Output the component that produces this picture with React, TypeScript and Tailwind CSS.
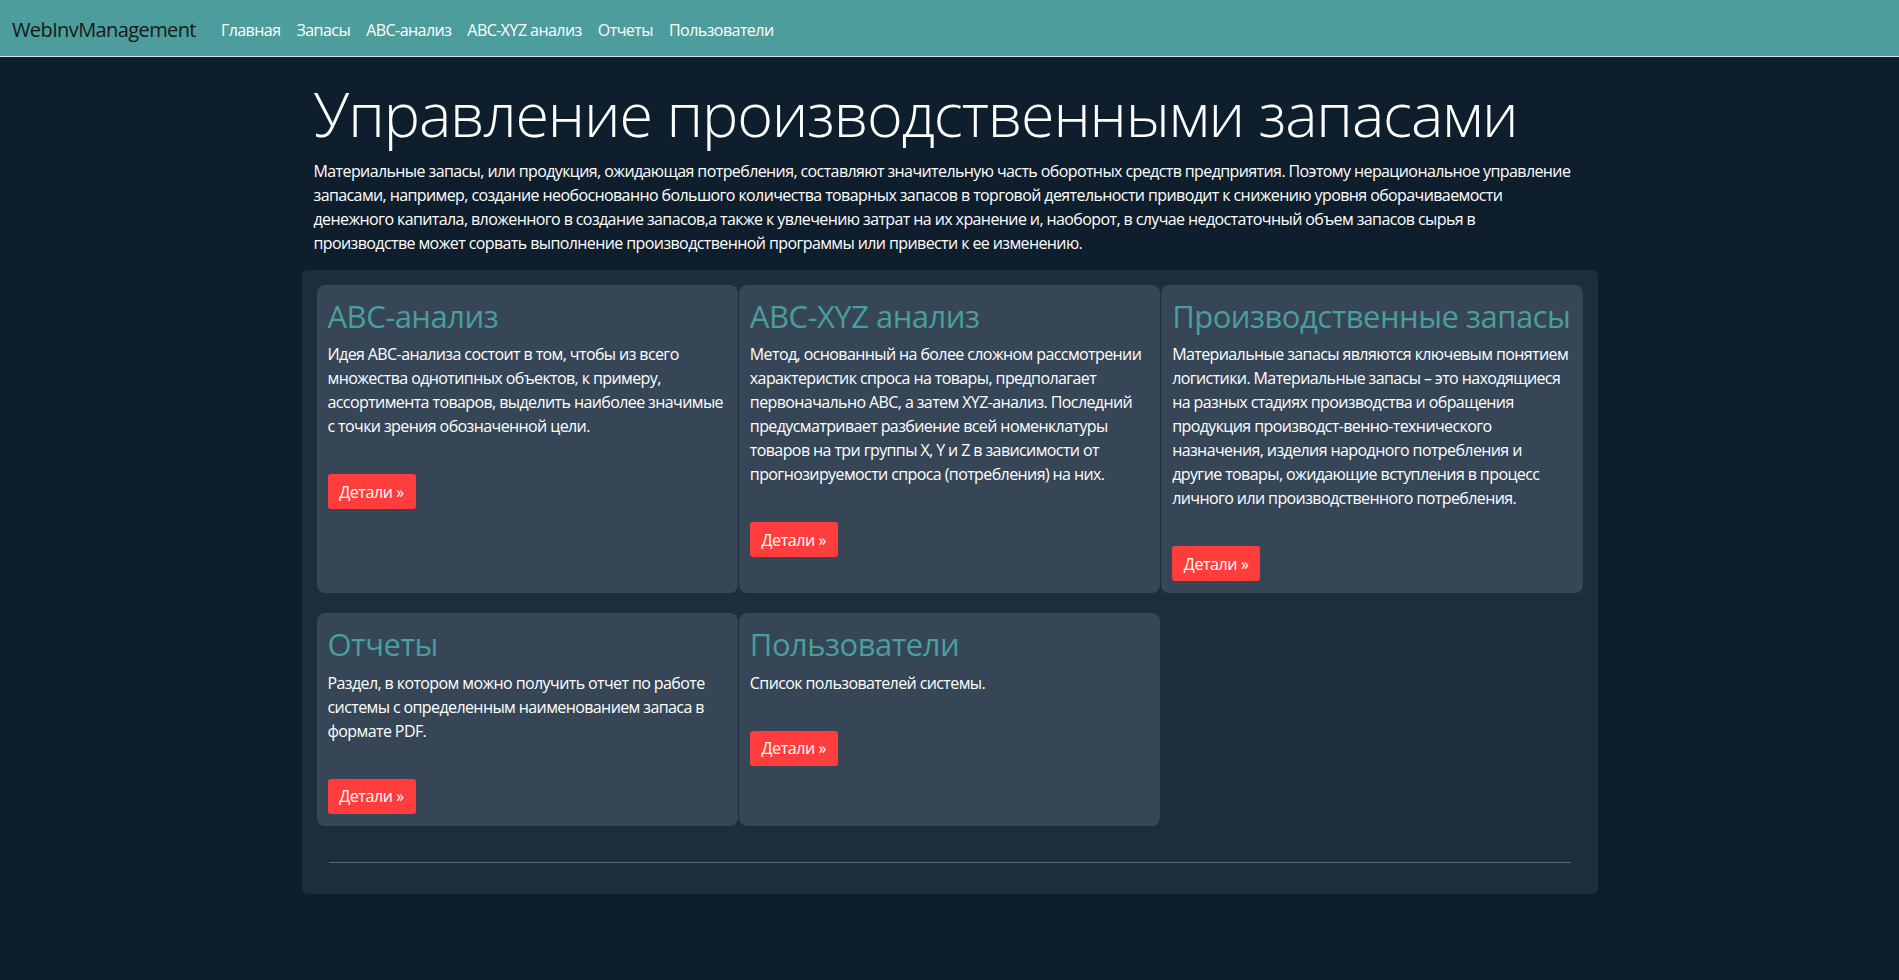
import React from "react";

const navLinks = ["Главная", "Запасы", "ABC-анализ", "ABC-XYZ анализ", "Отчеты", "Пользователи"];

const intro = [
  "Материальные запасы, или продукция, ожидающая потребления, составляют значительную часть оборотных средств предприятия. Поэтому нерациональное управление",
  "запасами, например, создание необоснованно большого количества товарных запасов в торговой деятельности приводит к снижению уровня оборачиваемости",
  "денежного капитала, вложенного в создание запасов,а также к увлечению затрат на их хранение и, наоборот, в случае недостаточный объем запасов сырья в",
  "производстве может сорвать выполнение производственной программы или привести к ее изменению.",
];

type Card = { title: string; lines: string[] };

const cards: Card[] = [
  {
    title: "ABC-анализ",
    lines: [
      "Идея ABC-анализа состоит в том, чтобы из всего",
      "множества однотипных объектов, к примеру,",
      "ассортимента товаров, выделить наиболее значимые",
      "с точки зрения обозначенной цели.",
    ],
  },
  {
    title: "ABC-XYZ анализ",
    lines: [
      "Метод, основанный на более сложном рассмотрении",
      "характеристик спроса на товары, предполагает",
      "первоначально ABC, а затем XYZ-анализ. Последний",
      "предусматривает разбиение всей номенклатуры",
      "товаров на три группы X, Y и Z в зависимости от",
      "прогнозируемости спроса (потребления) на них.",
    ],
  },
  {
    title: "Производственные запасы",
    lines: [
      "Материальные запасы являются ключевым понятием",
      "логистики. Материальные запасы – это находящиеся",
      "на разных стадиях производства и обращения",
      "продукция производст-венно-технического",
      "назначения, изделия народного потребления и",
      "другие товары, ожидающие вступления в процесс",
      "личного или производственного потребления.",
    ],
  },
  {
    title: "Отчеты",
    lines: [
      "Раздел, в котором можно получить отчет по работе",
      "системы с определенным наименованием запаса в",
      "формате PDF.",
    ],
  },
  {
    title: "Пользователи",
    lines: ["Список пользователей системы."],
  },
];

function CardView({ card }: { card: Card }) {
  return (
    <div className="flex flex-col rounded-lg bg-[#364657] px-[11px] pt-[13px] pb-[12px]">
      <h2 className="whitespace-nowrap text-[31px] font-normal leading-[1.2] tracking-[-0.5px] text-[#4a9e9b]">
        {card.title}
      </h2>
      <p className="mt-[7px] text-[16px] leading-6 tracking-[-0.6px] text-white">
        {card.lines.map((l, i) => (
          <span key={i} className="block whitespace-nowrap">
            {l}
          </span>
        ))}
      </p>
      <div className="mt-[36px]">
        <a className="inline-flex h-[35px] w-[88px] items-center justify-center rounded-[3px] bg-[#ff3d3d] text-[16px] tracking-[-0.4px] text-white">
          Детали »
        </a>
      </div>
    </div>
  );
}

export default function App() {
  return (
    <div className="min-h-[980px] bg-[#0f1e2d] font-['Open_Sans',sans-serif] text-white">
      <nav className="flex h-[57px] items-center border-b border-[#dfe8e8] bg-[#4d9d9d] px-3 pt-[3px]">
        <span className="mr-[17px] text-[20px] tracking-[-0.6px] text-[#151a1a]">WebInvManagement</span>
        <div className="flex">
          {navLinks.map((l) => (
            <a key={l} className="px-2 text-[16px] tracking-[-0.55px] text-white">
              {l}
            </a>
          ))}
        </div>
      </nav>
      <main className="mx-auto w-[1320px] px-3">
        <div className="px-[12px] pt-[20px]">
          <h1 className="whitespace-nowrap text-[61px] font-light leading-[1.2] tracking-[-1.15px] text-white">
            Управление производственными запасами
          </h1>
          <p className="mt-[9px] text-[16px] leading-6 tracking-[-0.6px] text-white">
            {intro.map((l, i) => (
              <span key={i} className="block whitespace-nowrap">
                {l}
              </span>
            ))}
          </p>
        </div>
        <section className="mt-[15px] rounded-md bg-[#1e2d3d] px-[15px] pt-[15px] pb-[31px]">
          <div className="grid grid-cols-3 gap-x-[1px] gap-y-[20px]">
            {cards.map((c) => (
              <CardView key={c.title} card={c} />
            ))}
          </div>
          <hr className="mx-[12px] mt-[36px] border-0 border-t border-[#5a6878]" />
        </section>
      </main>
    </div>
  );
}
